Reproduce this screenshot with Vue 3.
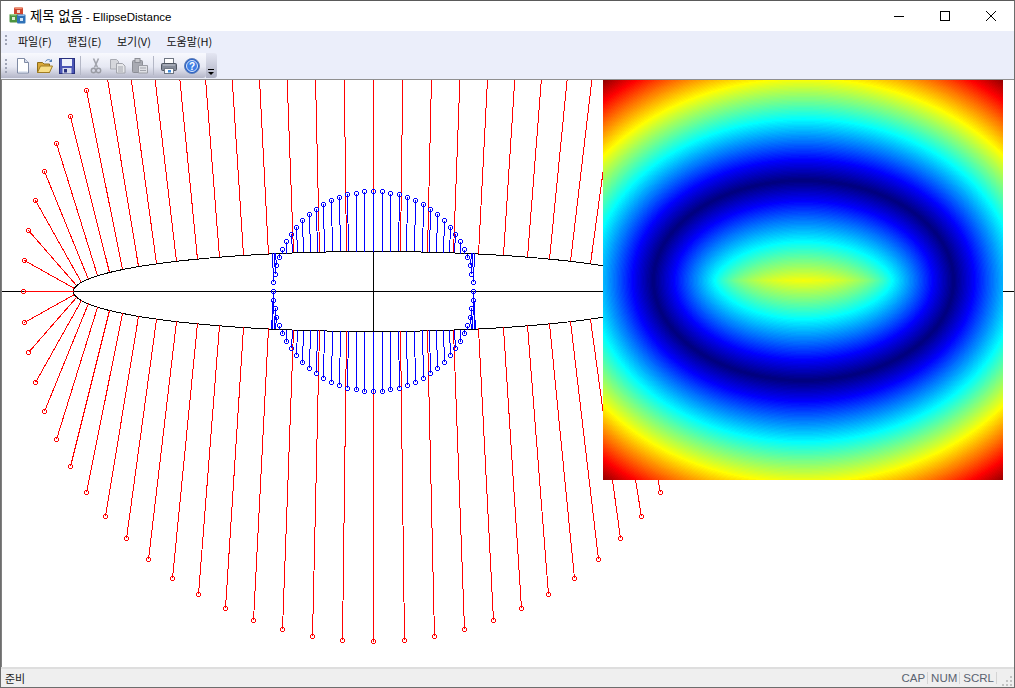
<script setup>
import { onMounted, ref } from "vue";

const W = 1012;
const H = 587;
const cx = 371.5;
const cy = 211.5;
const A = 300;
const B = 40;

// closest point on an axis-aligned ellipse (evolute iteration, works inside too)
function closest(px, py, a, b) {
  const x = Math.abs(px);
  const y = Math.abs(py);
  let tx = Math.SQRT1_2;
  let ty = Math.SQRT1_2;
  for (let i = 0; i < 8; i++) {
    const ex = ((a * a - b * b) * tx ** 3) / a;
    const ey = ((b * b - a * a) * ty ** 3) / b;
    const rx = a * tx - ex;
    const ry = b * ty - ey;
    const qx = x - ex;
    const qy = y - ey;
    const r = Math.hypot(rx, ry);
    const q = Math.hypot(qx, qy) || 1;
    tx = Math.min(1, Math.max(0, ((qx * r) / q + ex) / a));
    ty = Math.min(1, Math.max(0, ((qy * r) / q + ey) / b));
    const t = Math.hypot(tx, ty);
    tx /= t;
    ty /= t;
  }
  return [(px < 0 ? -1 : 1) * a * tx, (py < 0 ? -1 : 1) * b * ty];
}

function spokes(r) {
  const list = [];
  for (let deg = 0; deg < 360; deg += 5) {
    const rad = (deg * Math.PI) / 180;
    const px = Math.round(r * Math.cos(rad));
    const py = Math.round(r * Math.sin(rad));
    const [qx, qy] = closest(px, py, A, B);
    list.push({
      x1: cx + px,
      y1: cy + py,
      x2: cx + Math.round(qx),
      y2: cy + Math.round(qy),
    });
  }
  return list;
}

const outer = spokes(350);
const inner = spokes(100);

const ellipsePoints = [];
for (let i = 0; i <= 360; i += 1) {
  const rad = (i * Math.PI) / 180;
  ellipsePoints.push(`${cx + A * Math.cos(rad)},${cy + B * Math.sin(rad)}`);
}

function jet(v) {
  const c = (n) => Math.max(0, Math.min(1, 1.5 - Math.abs(4 * v - n)));
  return [c(3) * 255, c(2) * 255, c(1) * 255];
}

const heat = ref(null);

onMounted(() => {
  const ctx = heat.value.getContext("2d");
  const img = ctx.createImageData(400, 400);
  for (let y = 0; y < 400; y++) {
    for (let x = 0; x < 400; x++) {
      const px = x - 200;
      const py = y - 200;
      const [qx, qy] = closest(px, py, 150, 100);
      const d = Math.hypot(px - qx, py - qy) / 162;
      const band = Math.min(1, Math.floor(d * 128) / 128);
      const [r, g, b] = jet(band);
      const i = (y * 400 + x) * 4;
      img.data[i] = r;
      img.data[i + 1] = g;
      img.data[i + 2] = b;
      img.data[i + 3] = 255;
    }
  }
  ctx.putImageData(img, 0, 0);
});
</script>

<template>
  <div class="window">
    <header class="titlebar">
      <svg class="app-icon" width="18" height="18" viewBox="0 0 18 18">
        <rect x="5" y="0.5" width="9" height="8" rx="1" fill="#cf4630" />
        <path d="M5 0.5H14L12.5 2H6.5Z" fill="#ec8f70" />
        <rect x="0.5" y="7" width="8" height="8.5" rx="1" fill="#4c9440" />
        <path d="M0.5 7H8.5L7 8.5H2Z" fill="#9fd08a" />
        <rect x="8" y="7.5" width="8.5" height="9" rx="1" fill="#2f72b8" />
        <path d="M8 7.5H16.5L15 9H9.5Z" fill="#8fbce6" />
        <rect x="8" y="3" width="3" height="3" fill="#f7d6ca" />
        <rect x="3" y="10" width="3" height="3" fill="#dcefd4" />
        <rect x="11" y="11" width="3" height="3" fill="#d4e6f6" />
      </svg>
      <span class="title"><span class="title-ko">제목 없음</span> - EllipseDistance</span>
      <div class="caption">
        <button class="cap-btn">
          <svg width="12" height="12" viewBox="0 0 12 12"><path d="M1 6.5H11" stroke="#000" fill="none" /></svg>
        </button>
        <button class="cap-btn">
          <svg width="12" height="12" viewBox="0 0 12 12"><rect x="1.5" y="1.5" width="9" height="9" stroke="#000" fill="none" /></svg>
        </button>
        <button class="cap-btn">
          <svg width="12" height="12" viewBox="0 0 12 12"><path d="M1 1L11 11M11 1L1 11" stroke="#000" fill="none" /></svg>
        </button>
      </div>
    </header>

    <nav class="menubar">
      <span class="grip"></span>
      <span class="menu-item">파일(F)</span>
      <span class="menu-item">편집(E)</span>
      <span class="menu-item">보기(V)</span>
      <span class="menu-item">도움말(H)</span>
    </nav>

    <div class="toolrow">
      <div class="toolbar">
        <span class="grip short"></span>
        <svg class="tool" viewBox="0 0 16 16">
          <path d="M2.5 0.5H9.5L13.5 4.5V15H2.5Z" fill="#fff" stroke="#7f8aa4" />
          <path d="M9.5 0.5V4.5H13.5" fill="#d5dcec" stroke="#7f8aa4" />
          <path d="M3.5 14H12.5" stroke="#c6d0e4" />
        </svg>
        <svg class="tool" viewBox="0 0 16 16">
          <path d="M0.5 14.5V4.5H5.5L7 6H12.5V14.5Z" fill="#d9a838" stroke="#8f6c18" />
          <path d="M0.5 14.5L3.5 8H15.5L12.5 14.5Z" fill="#f8de86" stroke="#a07d24" />
          <path d="M8.5 3.5C10 1 13 1 14.5 3.5M14.5 1.5V3.5H12.5" fill="none" stroke="#4a78b0" />
        </svg>
        <svg class="tool" viewBox="0 0 16 16">
          <rect x="0.5" y="0.5" width="15" height="15" fill="#4b56b6" stroke="#28307e" />
          <rect x="3" y="1" width="10" height="7" fill="#eef1fb" />
          <rect x="3.5" y="10" width="9" height="5.5" fill="#d8dcec" />
          <rect x="5" y="11" width="3" height="3.5" fill="#28307e" />
        </svg>
        <span class="sep"></span>
        <svg class="tool" viewBox="0 0 16 16">
          <path d="M5.5 0.5L9.5 9.5M10.5 0.5L6.5 9.5" stroke="#a2a4ac" stroke-width="1.6" fill="none" />
          <circle cx="5.5" cy="12.5" r="2.2" fill="none" stroke="#9a9ca4" stroke-width="1.4" />
          <circle cx="10.5" cy="12.5" r="2.2" fill="none" stroke="#9a9ca4" stroke-width="1.4" />
        </svg>
        <svg class="tool" viewBox="0 0 16 16">
          <path d="M0.5 1.5H6.5L8.5 3.5V11H0.5Z" fill="#d6d7dc" stroke="#a8aab2" />
          <path d="M6.5 5.5H12.5L15 8V15H6.5Z" fill="#e6e7ea" stroke="#a2a4ac" />
          <path d="M8 9H13M8 11H13M8 13H13" stroke="#a2a4ac" />
        </svg>
        <svg class="tool" viewBox="0 0 16 16">
          <rect x="0.5" y="2.5" width="10" height="12" rx="1" fill="#a8aab2" stroke="#8c8e96" />
          <rect x="3" y="0.5" width="5" height="4" fill="#c8c9ce" stroke="#8c8e96" />
          <path d="M6.5 7.5H15.5V15H6.5Z" fill="#e0e1e6" stroke="#9a9ca4" />
          <path d="M8 10H14M8 12.5H14" stroke="#a2a4ac" />
        </svg>
        <span class="sep"></span>
        <svg class="tool" viewBox="0 0 16 16">
          <rect x="3.5" y="0.5" width="9" height="6" fill="#fff" stroke="#6f7682" />
          <rect x="0.5" y="5.5" width="15" height="7" rx="1" fill="#858b99" stroke="#4f5560" />
          <path d="M2 7H14" stroke="#c2c6d0" />
          <rect x="3.5" y="10.5" width="9" height="5" fill="#fff" stroke="#6f7682" />
          <rect x="7" y="12" width="3" height="2.5" fill="#3f8cdc" />
        </svg>
        <svg class="tool help" viewBox="0 0 16 16">
          <circle cx="8" cy="8" r="7.5" fill="#2a62c8" stroke="#5f7fb8" />
          <circle cx="8" cy="8" r="5.5" fill="#3f7fe6" stroke="#dbe8fb" />
          <text x="8" y="12" text-anchor="middle" class="help-mark">?</text>
        </svg>
      </div>
      <div class="overflow">
        <span class="bar"></span>
        <span class="chev"></span>
      </div>
    </div>

    <main class="canvas">
      <svg class="plot" :width="W" :height="H" shape-rendering="crispEdges">
        <polyline :points="ellipsePoints.join(' ')" fill="none" stroke="#000" />
        <line :x1="0" :y1="cy" :x2="W" :y2="cy" stroke="#000" />
        <line :x1="cx" :y1="cy - B" :x2="cx" :y2="cy + B" stroke="#000" />
        <g v-for="(s, i) in outer" :key="'o' + i">
          <line :x1="s.x1" :y1="s.y1" :x2="s.x2" :y2="s.y2" stroke="#f00" />
          <circle :cx="s.x1" :cy="s.y1" r="2" fill="none" stroke="#f00" />
        </g>
        <g v-for="(s, i) in inner" :key="'i' + i">
          <line :x1="s.x1" :y1="s.y1" :x2="s.x2" :y2="s.y2" stroke="#00f" />
          <circle :cx="s.x1" :cy="s.y1" r="2" fill="none" stroke="#00f" />
        </g>
      </svg>
      <canvas ref="heat" class="heat" width="400" height="400"></canvas>
    </main>

    <footer class="statusbar">
      <span class="ready">준비</span>
      <span class="pane">CAP</span>
      <span class="pane">NUM</span>
      <span class="pane">SCRL</span>
      <svg class="resize" width="12" height="12" viewBox="0 0 12 12">
        <path d="M9 2h2v2H9zM5 6h2v2H5zM9 6h2v2H9zM1 10h2v2H1zM5 10h2v2H5zM9 10h2v2H9z" fill="#c2c2c2" />
      </svg>
    </footer>
  </div>
</template>

<style>
html,
body {
  margin: 0;
  overflow: hidden;
  background: #fff;
}
</style>

<style scoped>
.window {
  width: 1015px;
  height: 688px;
  box-sizing: border-box;
  display: flex;
  flex-direction: column;
  font-family: "Noto Sans CJK KR", "Liberation Sans", sans-serif;
  font-size: 12px;
  color: #000;
  background: #fff;
  border: 1px solid #6d6d6d;
  border-top-color: #5a5a5a;
  overflow: hidden;
}

.titlebar {
  height: 30px;
  flex: none;
  display: flex;
  align-items: center;
  background: #fff;
  padding-left: 8px;
}

.app-icon {
  margin-right: 3px;
}

.title {
  font-size: 11.5px;
  font-family: "Liberation Sans", "Noto Sans CJK KR", sans-serif;
  margin-top: -2px;
}

.title-ko {
  font-size: 13.3px;
}

.caption {
  margin-left: auto;
  display: flex;
  height: 100%;
}

.cap-btn {
  width: 46px;
  height: 100%;
  border: 0;
  padding: 0;
  background: transparent;
  display: flex;
  align-items: center;
  justify-content: center;
}

.menubar {
  height: 20px;
  flex: none;
  display: flex;
  align-items: center;
  background: #ebeefa;
  padding-left: 4px;
}

.grip {
  width: 2px;
  height: 12px;
  margin-right: 4px;
  background: repeating-linear-gradient(to bottom, #9ea3b5 0 2px, transparent 2px 4px);
}

.grip.short {
  height: 14px;
  margin: 0 5px 0 4px;
}

.menu-item {
  padding: 0 7px;
  font-size: 11px;
  margin-right: 1.5px;
  color: #111;
}

.toolrow {
  height: 29px;
  flex: none;
  display: flex;
  background: #ebeefa;
  border-bottom: 1px solid #8f8f8f;
  box-sizing: border-box;
}

.toolbar {
  display: flex;
  align-items: center;
  height: 25px;
  margin-top: 2px;
  padding-right: 3px;
  background: linear-gradient(to bottom, #f8f9fe 0%, #e6e8f3 55%, #b4b6c8 100%);
  border-radius: 0 0 3px 0;
}

.tool {
  width: 16px;
  height: 16px;
  margin: 0 3px;
}

.help {
  margin-left: 4px;
}

.help-mark {
  font: bold 10px "Liberation Sans", sans-serif;
  fill: #fff;
}

.sep {
  width: 1px;
  height: 19px;
  margin: 0 3px 0 2px;
  background: #b4b7c6;
}

.sep + .tool {
  margin-left: 4px;
}

.overflow {
  width: 11px;
  height: 25px;
  margin-top: 2px;
  background: linear-gradient(to bottom, #e4e6f2, #aeb1c4);
  border-radius: 0 3px 3px 0;
  position: relative;
}

.bar {
  position: absolute;
  left: 2px;
  bottom: 8px;
  width: 6px;
  height: 1px;
  background: #000;
}

.chev {
  position: absolute;
  left: 2px;
  bottom: 3px;
  width: 0;
  height: 0;
  border-left: 3px solid transparent;
  border-right: 3px solid transparent;
  border-top: 3px solid #000;
}

.canvas {
  flex: 1;
  position: relative;
  background: #fff;
  border-left: 1px solid #808080;
  overflow: hidden;
}

.plot {
  display: block;
}

.heat {
  position: absolute;
  left: 601px;
  top: 0;
  width: 400px;
  height: 400px;
}

.statusbar {
  height: 20px;
  flex: none;
  box-sizing: border-box;
  display: flex;
  align-items: center;
  background: #efefef;
  border-top: 2px solid #dedede;
  font-size: 11px;
  padding-left: 4px;
  color: #222;
}

.ready {
  margin-right: auto;
}

.pane {
  padding: 0 2px 0 3px;
  border-right: 1px solid #d4d4d4;
  color: #5a6270;
  font-family: "Liberation Sans", sans-serif;
  font-size: 11.5px;
}

.resize {
  margin: 4px 1px 0 4px;
}
</style>
